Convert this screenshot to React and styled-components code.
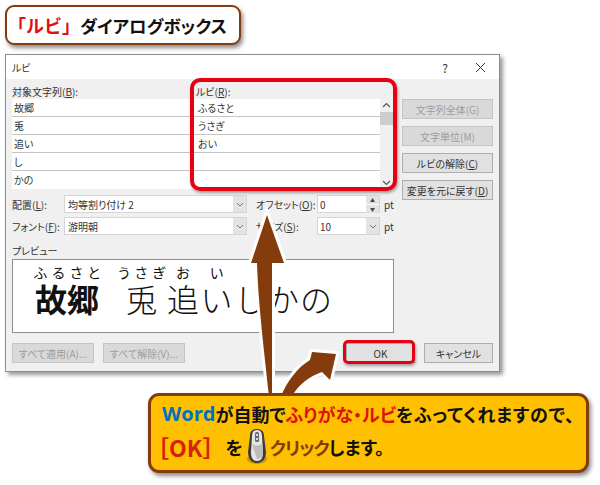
import React from 'react';
import styled, { createGlobalStyle } from 'styled-components';

const UI_FONT = `"Noto Sans CJK JP", "Noto Sans", sans-serif`;

const GlobalStyle = createGlobalStyle`
	html, body {
		margin: 0;
		padding: 0;
		background: #fff;
	}
	* {
		box-sizing: border-box;
	}
`;

const leftRows = ['故郷', '兎', '追い', 'し', 'かの'];
const rightRows = ['ふるさと', 'うさぎ', 'おい', '', ''];

const MouseIcon = () => (
	<svg width="22" height="37" viewBox="0 0 22 37">
		<ellipse cx="11" cy="31" rx="10" ry="5" fill="#a9781a" opacity="0.6" />
		<path d="M4 8 C4 3 7 1 11 1 C15 1 18 3 18 8 L20 24 C20 31 16 35 11 35 C6 35 2 31 2 24 Z" fill="#3c3c3c" />
		<path d="M6 8 C6 4 8 2 11 2 C14 2 16 4 16 8 L17 24 C17 30 15 33 11 33 C7 33 5 30 5 24 Z" fill="#e4e4e4" />
		<path d="M6 16 C9 18 13 18 16 16 L17 24 C17 29 14 31 11 31 Z" fill="#bcbcbc" />
		<rect x="9" y="4" width="4" height="10" rx="1.5" fill="#6a6a6a" />
		<rect x="10" y="6" width="2" height="2" fill="#d8d8d8" />
		<rect x="10" y="10" width="2" height="2" fill="#d8d8d8" />
	</svg>
);

const Arrows = () => (
	<ArrowLayer viewBox="0 0 600 485">
		<g fill="#843C0C" stroke="#fff" strokeWidth="6" strokeLinejoin="miter" paintOrder="stroke">
			<path d="M267 215 L284 263 L272 263 C272 300 272 350 272 396 L269 396 C264 350 258 300 257 263 L251 263 Z" />
			<path d="M336 354 L330 380 L322 372 C310 376 299 384 292 396 L281 396 C288 380 298 367 310 360 L312 352 Z" />
		</g>
	</ArrowLayer>
);

const App = () => {
	return (
		<>
			<GlobalStyle />
			<Page>
				<TitleBox>
					<TitleBracket>「ルビ」</TitleBracket>ダイアログボックス
				</TitleBox>
				<Dialog>
					<TitleBar>
						<span>ルビ</span>
						<WindowControls>
							<Help>?</Help>
							<svg width="11" height="11" viewBox="0 0 11 11">
								<path d="M1 1 L10 10 M10 1 L1 10" stroke="#333" strokeWidth="1" />
							</svg>
						</WindowControls>
					</TitleBar>
					<Body>
						<TopSection>
							<ListColumn>
								<FieldLabel>対象文字列(<u>B</u>):</FieldLabel>
								<List>
									{leftRows.map((row, i) => (
										<Row key={i}>{row}</Row>
									))}
								</List>
							</ListColumn>
							<ListColumn>
								<FieldLabel>ルビ(<u>R</u>):</FieldLabel>
								<List>
									{rightRows.map((row, i) => (
										<Row key={i}>{row}</Row>
									))}
								</List>
							</ListColumn>
							<Scrollbar>
								<svg width="9" height="6" viewBox="0 0 9 6">
									<path d="M1 5 L4.5 1.5 L8 5" fill="none" stroke="#555" strokeWidth="1.2" />
								</svg>
								<Thumb />
								<svg width="9" height="6" viewBox="0 0 9 6">
									<path d="M1 1 L4.5 4.5 L8 1" fill="none" stroke="#555" strokeWidth="1.2" />
								</svg>
							</Scrollbar>
							<SideButtons>
								<SideButton disabled>文字列全体(G)</SideButton>
								<SideButton disabled>文字単位(M)</SideButton>
								<SideButton>ルビの解除(<u>C</u>)</SideButton>
								<SideButton>変更を元に戻す(<u>D</u>)</SideButton>
							</SideButtons>
						</TopSection>
						<FormGrid>
							<FormLabel>配置(<u>L</u>):</FormLabel>
							<SelectBox>
								<span>均等割り付け 2</span>
								<SelectArrow />
							</SelectBox>
							<FormLabel>オフセット(<u>O</u>):</FormLabel>
							<NumberBox>
								<span>0</span>
								<Spinner>
									<SpinPart>▲</SpinPart>
									<SpinPart>▼</SpinPart>
								</Spinner>
							</NumberBox>
							<Unit>pt</Unit>
							<FormLabel>フォント(<u>F</u>):</FormLabel>
							<SelectBox>
								<span>游明朝</span>
								<SelectArrow />
							</SelectBox>
							<FormLabel>サイズ(<u>S</u>):</FormLabel>
							<NumberBox>
								<span>10</span>
								<SelectArrow />
							</NumberBox>
							<Unit>pt</Unit>
						</FormGrid>
						<PreviewLabel>プレビュー</PreviewLabel>
						<Preview>
							<Word $width={66} $mr={18}>
								<RubyLine><span>ふ</span><span>る</span><span>さ</span><span>と</span></RubyLine>
								<BaseLine $bold>故郷</BaseLine>
							</Word>
							<Word $width={47} $mr={2}>
								<RubyLine><span>う</span><span>さ</span><span>ぎ</span></RubyLine>
								<BaseLine>兎</BaseLine>
							</Word>
							<Word $width={32}>
								<RubyLine $center><span>お</span></RubyLine>
								<BaseLine>追</BaseLine>
							</Word>
							<Word $width={35}>
								<RubyLine $center><span>い</span></RubyLine>
								<BaseLine>い</BaseLine>
							</Word>
							<Word $width={90}>
								<RubyLine />
								<BaseLine $spread>しかの</BaseLine>
							</Word>
						</Preview>
						<BottomRow>
							<BottomGroup>
								<FooterButton disabled>すべて適用(A)...</FooterButton>
								<FooterButton disabled>すべて解除(V)...</FooterButton>
							</BottomGroup>
							<BottomGroup>
								<FooterButton $small>OK</FooterButton>
								<FooterButton $small>キャンセル</FooterButton>
							</BottomGroup>
						</BottomRow>
					</Body>
				</Dialog>
				<Callout>
					<CalloutLine>
						<BlueText>Word</BlueText>が自動で<RedText>ふりがな・ルビ</RedText><WideText>をふってくれますので、</WideText>
					</CalloutLine>
					<CalloutLine>
						<OkText>［OK］</OkText>
						<Particle>を</Particle>
						<MouseIcon />
						<BrownText>クリック</BrownText>します。
					</CalloutLine>
				</Callout>
				<RubyFrame />
				<OkFrame />
				<Arrows />
			</Page>
		</>
	);
};

const Page = styled.div`
	position: relative;
	width: 600px;
	height: 485px;
	padding: 5px 0 0 5px;
	overflow: hidden;
	background: #fff;
	font-family: ${UI_FONT};
	font-feature-settings: 'palt';
`;
const TitleBox = styled.div`
	display: flex;
	align-items: center;
	width: 236px;
	height: 40px;
	padding-left: 1px;
	background: #fff;
	border: 2px solid #843c0c;
	border-radius: 9px;
	box-shadow: 2px 3px 4px rgba(0, 0, 0, 0.45);
	font-size: 17.5px;
	font-weight: 700;
	color: #111;
	white-space: nowrap;
`;
const TitleBracket = styled.span`
	color: #e0100f;
	font-size: 18px;
	font-feature-settings: normal;
`;
const RedText = styled.span`
	color: #e0100f;
`;
const Dialog = styled.div`
	width: 495px;
	height: 318px;
	margin-top: 9px;
	background: #f0f0f0;
	border: 1px solid #8c8c8c;
	box-shadow: 3px 3px 4px rgba(0, 0, 0, 0.4);
	color: #333;
	font-size: 10px;
`;
const TitleBar = styled.div`
	display: flex;
	align-items: center;
	justify-content: space-between;
	height: 24px;
	padding: 0 13px 0 6px;
	background: #fff;
`;
const WindowControls = styled.div`
	display: flex;
	align-items: center;
	gap: 27px;
`;
const Help = styled.span`
	font-size: 12px;
`;
const Body = styled.div`
	padding: 6px 6px 0 6px;
`;
const TopSection = styled.div`
	display: flex;
	align-items: flex-start;
	height: 110px;
`;
const ListColumn = styled.div`
	width: 184px;
`;
const FieldLabel = styled.div`
	height: 14px;
	line-height: 13px;
	white-space: nowrap;
`;
const List = styled.div`
	display: flex;
	flex-direction: column;
	background: #fff;
`;
const Row = styled.div`
	height: 18px;
	padding-left: 2px;
	border-bottom: 1px solid #c4c4c4;
	line-height: 17px;
	white-space: nowrap;
	&:last-child {
		border-bottom: none;
	}
`;
const Scrollbar = styled.div`
	display: flex;
	flex-direction: column;
	align-items: center;
	width: 13px;
	height: 90px;
	margin-top: 14px;
	padding-top: 3px;
	background: #f0f0f0;
	svg:last-child {
		margin-top: auto;
		margin-bottom: 3px;
	}
`;
const Thumb = styled.div`
	width: 100%;
	height: 13px;
	margin-top: 4px;
	background: #cdcdcd;
`;
const SideButtons = styled.div`
	display: flex;
	flex-direction: column;
	gap: 7px;
	width: 91px;
	margin: 14px 0 0 9px;
`;
const SideButton = styled.button`
	width: 100%;
	height: 20px;
	padding: 0;
	background: ${(p) => (p.disabled ? '#d9d9d9' : '#e1e1e1')};
	border: 1px solid ${(p) => (p.disabled ? '#c4c4c4' : '#adadad')};
	color: ${(p) => (p.disabled ? '#9c9c9c' : '#333')};
	font: inherit;
	font-feature-settings: inherit;
	white-space: nowrap;
`;
const FormGrid = styled.div`
	display: grid;
	grid-template-columns: 52px 192px 61px 63px auto;
	grid-auto-rows: 18px;
	row-gap: 4px;
	align-items: center;
`;
const FormLabel = styled.div`
	white-space: nowrap;
`;
const SelectBox = styled.div`
	display: flex;
	align-items: center;
	justify-content: space-between;
	width: 183px;
	height: 18px;
	padding-left: 3px;
	background: #fff;
	border: 1px solid #d5d5d5;
`;
const SelectArrow = () => (
	<ArrowBox>
		<svg width="8" height="5" viewBox="0 0 8 5">
			<path d="M1 1 L4 4 L7 1" fill="none" stroke="#777" strokeWidth="1" />
		</svg>
	</ArrowBox>
);
const ArrowBox = styled.div`
	display: flex;
	align-items: center;
	justify-content: center;
	width: 13px;
	height: 100%;
	background: #e3e3e3;
`;
const NumberBox = styled.div`
	display: flex;
	align-items: center;
	justify-content: space-between;
	height: 18px;
	padding-left: 2px;
	background: #fff;
	border: 1px solid #d5d5d5;
`;
const Spinner = styled.div`
	display: flex;
	flex-direction: column;
	gap: 1px;
	width: 13px;
	height: 100%;
`;
const SpinPart = styled.div`
	flex: 1;
	background: #e3e3e3;
	color: #444;
	font-size: 5px;
	line-height: 8px;
	text-align: center;
`;
const Unit = styled.div`
	padding-left: 4px;
`;
const PreviewLabel = styled.div`
	height: 15px;
	margin-top: 9px;
	line-height: 14px;
`;
const Preview = styled.div`
	display: flex;
	width: 382px;
	height: 74px;
	padding: 5px 0 0 21px;
	background: #fff;
	border: 1px solid #8f8f8f;
	color: #111;
`;
const Word = styled.div`
	display: flex;
	flex-direction: column;
	width: ${(p) => p.$width}px;
	margin-right: ${(p) => p.$mr || 0}px;
`;
const RubyLine = styled.div`
	display: flex;
	justify-content: ${(p) => (p.$center ? 'center' : 'space-between')};
	height: 14px;
	font-size: 14px;
	line-height: 14px;
`;
const BaseLine = styled.div`
	font-size: 32px;
	font-weight: ${(p) => (p.$bold ? 700 : 300)};
	line-height: 38px;
	text-align: center;
	white-space: nowrap;
	letter-spacing: ${(p) => (p.$spread ? '1px' : '0')};
	font-feature-settings: normal;
`;
const BottomRow = styled.div`
	display: flex;
	justify-content: space-between;
	width: 481px;
	margin-top: 10px;
`;
const BottomGroup = styled.div`
	display: flex;
	gap: 9px;
`;
const FooterButton = styled.button`
	width: ${(p) => (p.$small ? 69 : 82)}px;
	height: 20px;
	padding: 0;
	background: ${(p) => (p.disabled ? '#d9d9d9' : '#e1e1e1')};
	border: 1px solid ${(p) => (p.disabled ? '#c4c4c4' : '#adadad')};
	color: ${(p) => (p.disabled ? '#9c9c9c' : '#333')};
	font: inherit;
	font-feature-settings: inherit;
	white-space: nowrap;
`;
const Callout = styled.div`
	position: relative;
	z-index: 2;
	display: flex;
	flex-direction: column;
	width: 441px;
	height: 80px;
	margin: 21px 0 0 143px;
	padding: 1px 0 0 11px;
	background: #ffc000;
	border: 3px solid #843c0c;
	border-radius: 11px;
	box-shadow: 2px 3px 4px rgba(0, 0, 0, 0.45);
	color: #111;
	font-size: 18px;
	font-weight: 700;
`;
const CalloutLine = styled.div`
	display: flex;
	align-items: center;
	height: 33px;
	white-space: nowrap;
`;
const BlueText = styled.span`
	color: #0070c0;
	font-family: 'Open Sans', sans-serif;
	font-size: 20px;
`;
const WideText = styled.span`
	letter-spacing: 0.8px;
`;
const OkText = styled.span`
	margin-left: -16px;
	color: #d8230c;
	font-size: 23px;
	font-feature-settings: normal;
`;
const Particle = styled.span`
	margin: 0 3px 0 0;
`;
const BrownText = styled.span`
	margin-left: 2px;
	color: #843c0c;
	letter-spacing: -1px;
`;
const RubyFrame = styled.div`
	position: absolute;
	left: 190px;
	top: 78px;
	width: 207px;
	height: 113px;
	border: 4px solid #e60012;
	border-radius: 10px;
	box-shadow: 1px 2px 3px rgba(0, 0, 0, 0.35);
`;
const OkFrame = styled.div`
	position: absolute;
	left: 343px;
	top: 340px;
	width: 72px;
	height: 24px;
	border: 3px solid #e60012;
	border-radius: 5px;
	box-shadow: 1px 2px 3px rgba(0, 0, 0, 0.35);
`;
const ArrowLayer = styled.svg`
	position: absolute;
	left: 0;
	top: 0;
	z-index: 1;
	width: 600px;
	height: 485px;
	pointer-events: none;
`;

export default App;
